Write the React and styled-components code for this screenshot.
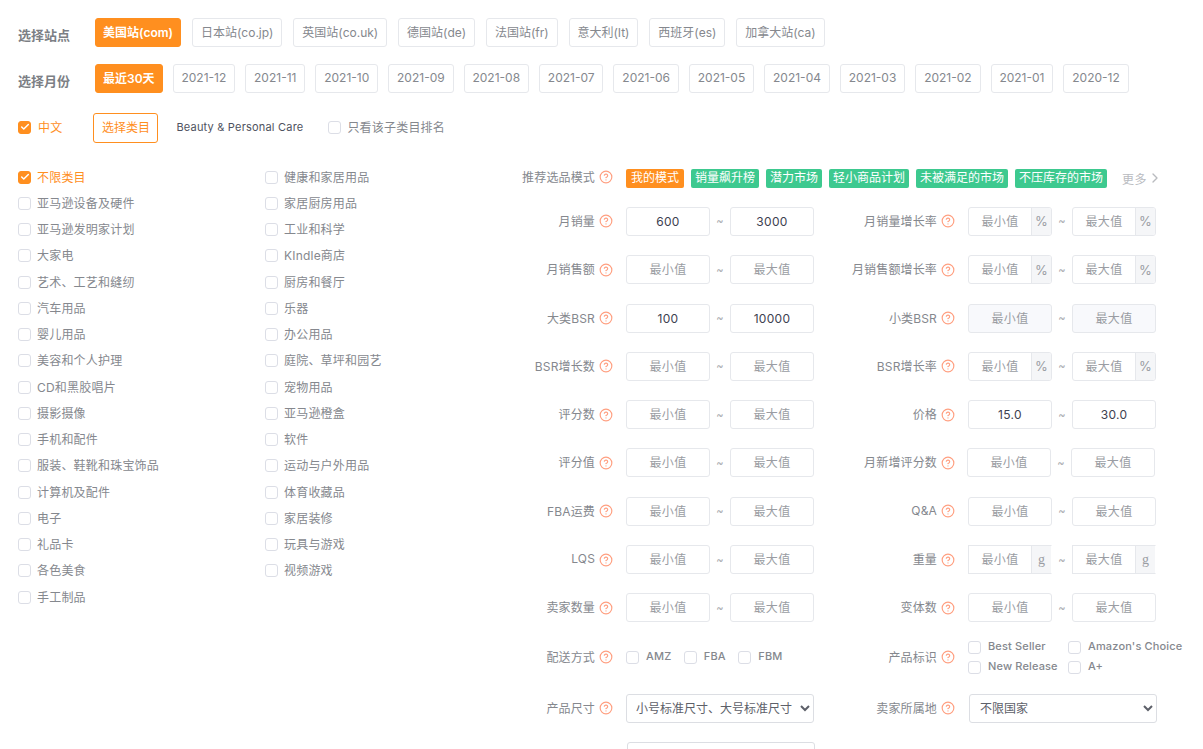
import React from "react";
import styled, { createGlobalStyle } from "styled-components";
import { Check, ChevronRight, CircleHelp } from "lucide-react";

const sites = ["美国站(com)", "日本站(co.jp)", "英国站(co.uk)", "德国站(de)", "法国站(fr)", "意大利(It)", "西班牙(es)", "加拿大站(ca)"];
const months = ["最近30天", "2021-12", "2021-11", "2021-10", "2021-09", "2021-08", "2021-07", "2021-06", "2021-05", "2021-04", "2021-03", "2021-02", "2021-01", "2020-12"];
const categoriesA = ["不限类目", "亚马逊设备及硬件", "亚马逊发明家计划", "大家电", "艺术、工艺和缝纫", "汽车用品", "婴儿用品", "美容和个人护理", "CD和黑胶唱片", "摄影摄像", "手机和配件", "服装、鞋靴和珠宝饰品", "计算机及配件", "电子", "礼品卡", "各色美食", "手工制品"];
const categoriesB = ["健康和家居用品", "家居厨房用品", "工业和科学", "KIndle商店", "厨房和餐厅", "乐器", "办公用品", "庭院、草坪和园艺", "宠物用品", "亚马逊橙盒", "软件", "运动与户外用品", "体育收藏品", "家居装修", "玩具与游戏", "视频游戏"];
const modes = ["销量飙升榜", "潜力市场", "轻小商品计划", "未被满足的市场", "不压库存的市场"];

const rows = [
  [{ label: "月销量", min: "600", max: "3000" }, { label: "月销量增长率", unit: "%" }],
  [{ label: "月销售额" }, { label: "月销售额增长率", unit: "%" }],
  [{ label: "大类BSR", min: "100", max: "10000" }, { label: "小类BSR", disabled: true }],
  [{ label: "BSR增长数" }, { label: "BSR增长率", unit: "%" }],
  [{ label: "评分数" }, { label: "价格", min: "15.0", max: "30.0" }],
  [{ label: "评分值" }, { label: "月新增评分数", shift: true }],
  [{ label: "FBA运费" }, { label: "Q&A" }],
  [{ label: "LQS" }, { label: "重量", unit: "g" }],
  [{ label: "卖家数量" }, { label: "变体数" }],
];

const GlobalStyle = createGlobalStyle`
  html, body {
    margin: 0;
    height: 749px;
    overflow: hidden;
    background: #fff;
    font-family: Inter, "Noto Sans CJK SC", sans-serif;
  }
`;

const Page = styled.div`
  width: 1203px;
  height: 749px;
  overflow: hidden;
  padding: 18px 0 0 18px;
  box-sizing: border-box;
  color: #7c7f85;
  font-size: 12px;
`;

const PickRow = styled.div`
  display: flex;
  align-items: flex-start;
  height: 29px;
  margin-bottom: ${(p) => p.$mb}px;
`;

const PickLabel = styled.div`
  width: 77px;
  flex: none;
  padding-top: 7px;
  font-size: 13px;
  font-weight: 700;
  color: #7c7f85;
`;

const PickList = styled.div`
  display: flex;
  gap: ${(p) => p.$gap}px;
`;

const PickButton = styled.button`
  height: 29px;
  box-sizing: border-box;
  padding: 0 ${(p) => (p.$active ? 7 : 7.9)}px 2px;
  border-radius: 3px;
  border: 1px solid ${(p) => (p.$active ? "#ff8f1f" : "#e6e8ec")};
  background: ${(p) => (p.$active ? "#ff8f1f" : "#fff")};
  color: ${(p) => (p.$active ? "#fff" : "#85888e")};
  font-family: inherit;
  font-size: 12px;
  font-weight: ${(p) => (p.$active ? 600 : 400)};
  white-space: nowrap;
`;

const CategoryBar = styled.div`
  display: flex;
  align-items: center;
  height: 28px;
  margin-top: 20px;
`;

const Box = styled.span`
  width: 13px;
  height: 13px;
  flex: none;
  box-sizing: border-box;
  border-radius: 3px;
  border: 1px solid ${(p) => (p.$on ? "#ff8f1f" : "#dcdee6")};
  background: ${(p) => (p.$on ? "#ff8f1f" : "#fff")};
  display: inline-flex;
  align-items: center;
  justify-content: center;
  color: #fff;
`;

const CheckText = styled.span`
  margin-left: ${(p) => p.$gap || 6}px;
  padding-bottom: 2px;
  font-size: 12px;
  letter-spacing: 0.2px;
  color: ${(p) => (p.$on ? "#ff8f1f" : "#85888e")};
  white-space: nowrap;
`;

const CheckItem = styled.label`
  display: inline-flex;
  align-items: center;
`;

const SelectCategory = styled.button`
  width: 65px;
  height: 30px;
  margin: 2px 0 0 31px;
  padding: 0 0 4px;
  box-sizing: border-box;
  background: #fff;
  border: 1px solid #ff8f1f;
  border-radius: 3px;
  color: #ff8f1f;
  font-family: inherit;
  font-size: 12px;
`;

const CurrentCategory = styled.span`
  margin: 0 25px 0 18px;
  font-size: 11px;
  letter-spacing: 0.2px;
  color: #4e5260;
  white-space: nowrap;
`;

const Body = styled.div`
  display: flex;
  margin-top: 22px;
`;

const Categories = styled.div`
  display: grid;
  grid-template-columns: 247px 234px;
  width: 481px;
  flex: none;
  height: 440px;
  padding-top: 1px;
`;

const CategoryColumn = styled.div`
  display: flex;
  flex-direction: column;
`;

const CategoryRow = styled.div`
  height: 26.25px;
  display: flex;
  align-items: center;
`;

const Form = styled.div`
  width: 703px;
  flex: none;
  margin-top: -6px;
`;

const FormRow = styled.div`
  display: flex;
  align-items: center;
  height: ${(p) => p.$h}px;
`;

const Field = styled.div`
  display: flex;
  align-items: center;
  width: ${(p) => (p.$second ? 342 : 314)}px;
  flex: none;
`;

const FieldLabel = styled.div`
  width: ${(p) => (p.$second ? 124 : 96)}px;
  flex: none;
  padding-bottom: 2px;
  text-align: right;
  white-space: nowrap;
  font-size: 12px;
  letter-spacing: 0.15px;
  color: #85888e;
`;

const Help = styled(CircleHelp)`
  width: 14px;
  height: 14px;
  flex: none;
  margin: 0 ${(p) => (p.$shift ? 12 : 13)}px 0 4px;
  color: #ff9f80;
`;

const HelpSpacer = styled.span`
  width: 31px;
  flex: none;
`;

const Range = styled.div`
  display: flex;
  align-items: center;
`;

const Tilde = styled.span`
  width: 20px;
  text-align: center;
  font-size: 11px;
  color: #a8abb0;
`;

const InputWrap = styled.div`
  width: 84px;
  height: 29px;
  box-sizing: border-box;
  display: flex;
  border: 1px solid #e6e8ec;
  border-right-color: ${(p) => (p.$flat ? "transparent" : "#e6e8ec")};
  border-radius: ${(p) => (p.$flat ? "0" : "3px")};
  background: ${(p) => (p.$disabled ? "#f8f9fc" : "#fff")};
  overflow: hidden;
`;

const Input = styled.input`
  flex: 1;
  min-width: 0;
  width: 100%;
  padding: 0;
  border: 0;
  outline: 0;
  text-align: center;
  background: transparent;
  font-family: inherit;
  font-size: 12px;
  letter-spacing: 0.3px;
  color: #3d4150;
  &::placeholder {
    color: #9a9da3;
    opacity: 1;
  }
`;

const Unit = styled.span`
  width: 19px;
  flex: none;
  display: flex;
  align-items: center;
  justify-content: center;
  background: #f5f6f8;
  border-left: 1px solid #e6e8ec;
  color: #9a9da3;
  font-size: ${(p) => (p.$serif ? 14 : 13)}px;
  font-family: ${(p) => (p.$serif ? '"Liberation Serif", serif' : "inherit")};
`;

const ModeTags = styled.div`
  display: flex;
  align-items: center;
  gap: 7px;
  margin-top: 2px;
`;

const ModeTag = styled.span`
  height: 19px;
  line-height: 18px;
  padding: 0 ${(p) => (p.$mine ? 5 : 4)}px;
  border-radius: 2px;
  background: ${(p) => (p.$mine ? "#ff8f1f" : "#3dc98f")};
  color: #fff;
  font-size: 12px;
  white-space: nowrap;
`;

const More = styled.span`
  display: inline-flex;
  align-items: center;
  margin-left: 8px;
  font-size: 12px;
  letter-spacing: 0.3px;
  color: #b9bbbf;
`;

const Options = styled.div`
  display: flex;
  align-items: center;
  gap: 12.5px;
`;

const BadgeGrid = styled.div`
  display: grid;
  grid-template-columns: 100px 120px;
  row-gap: 4px;
`;

const SmallOption = styled(CheckText)`
  margin-left: 7px;
  font-size: 11px;
  font-weight: 500;
  letter-spacing: 0.15px;
`;

const Select = styled.select`
  width: 188px;
  height: 29px;
  flex: none;
  margin-left: ${(p) => p.$ml || 0}px;
  box-sizing: border-box;
  padding: 0 ${(p) => p.$pad}px;
  background: #fff;
  border: 1px solid #dcdee3;
  border-radius: 3px;
  font-family: inherit;
  font-size: 12px;
  color: #5d6069;
  outline: 0;
`;

const Checkbox = ({ on }) => (
  <Box $on={on}>{on && <Check size={10} strokeWidth={3.5} />}</Box>
);

const RangeInput = ({ min, max, unit, disabled }) => {
  const parts = [
    { placeholder: "最小值", value: min },
    { placeholder: "最大值", value: max },
  ];
  return (
    <Range>
      {parts.map((part, i) => (
        <React.Fragment key={part.placeholder}>
          {i === 1 && <Tilde>~</Tilde>}
          <InputWrap $disabled={disabled} $flat={unit === "g"}>
            <Input placeholder={part.placeholder} defaultValue={part.value} disabled={disabled} />
            {unit && <Unit $serif={unit === "g"}>{unit}</Unit>}
          </InputWrap>
        </React.Fragment>
      ))}
    </Range>
  );
};

export default function App() {
  return (
    <Page>
      <GlobalStyle />

      <PickRow $mb={17}>
        <PickLabel>选择站点</PickLabel>
        <PickList $gap={11}>
          {sites.map((site, i) => (
            <PickButton key={site} $active={i === 0}>{site}</PickButton>
          ))}
        </PickList>
      </PickRow>

      <PickRow $mb={0}>
        <PickLabel>选择月份</PickLabel>
        <PickList $gap={10}>
          {months.map((month, i) => (
            <PickButton key={month} $active={i === 0}>{month}</PickButton>
          ))}
        </PickList>
      </PickRow>

      <CategoryBar>
        <CheckItem>
          <Checkbox on />
          <CheckText $on $gap={7}>中文</CheckText>
        </CheckItem>
        <SelectCategory>选择类目</SelectCategory>
        <CurrentCategory>Beauty &amp; Personal Care</CurrentCategory>
        <CheckItem>
          <Checkbox />
          <CheckText>只看该子类目排名</CheckText>
        </CheckItem>
      </CategoryBar>

      <Body>
        <Categories>
          {[categoriesA, categoriesB].map((column) => (
            <CategoryColumn key={column[0]}>
              {column.map((name) => (
                <CategoryRow key={name}>
                  <Checkbox on={name === "不限类目"} />
                  <CheckText $on={name === "不限类目"}>{name}</CheckText>
                </CategoryRow>
              ))}
            </CategoryColumn>
          ))}
        </Categories>

        <Form>
          <FormRow $h={40.35}>
            <FieldLabel>推荐选品模式</FieldLabel>
            <Help />
            <ModeTags>
              <ModeTag $mine>我的模式</ModeTag>
              {modes.map((mode) => (
                <ModeTag key={mode}>{mode}</ModeTag>
              ))}
              <More>
                更多
                <ChevronRight size={16} />
              </More>
            </ModeTags>
          </FormRow>

          {rows.map((row) => (
            <FormRow key={row[0].label} $h={48.3}>
              {row.map((field, i) => (
                <Field key={field.label} $second={i === 1}>
                  <FieldLabel $second={i === 1}>{field.label}</FieldLabel>
                  <Help $shift={field.shift} />
                  <RangeInput {...field} />
                </Field>
              ))}
            </FormRow>
          ))}

          <FormRow $h={50}>
            <Field>
              <FieldLabel>配送方式</FieldLabel>
              <Help />
              <Options>
                {["AMZ", "FBA", "FBM"].map((name) => (
                  <CheckItem key={name}>
                    <Checkbox />
                    <SmallOption>{name}</SmallOption>
                  </CheckItem>
                ))}
              </Options>
            </Field>
            <Field $second>
              <FieldLabel $second>产品标识</FieldLabel>
              <Help />
              <BadgeGrid>
                {["Best Seller", "Amazon's Choice", "New Release", "A+"].map((name) => (
                  <CheckItem key={name}>
                    <Checkbox />
                    <SmallOption>{name}</SmallOption>
                  </CheckItem>
                ))}
              </BadgeGrid>
            </Field>
          </FormRow>

          <FormRow $h={52.9}>
            <Field>
              <FieldLabel>产品尺寸</FieldLabel>
              <Help />
              <Select $pad={5} defaultValue="a">
                <option value="a">小号标准尺寸、大号标准尺寸</option>
              </Select>
            </Field>
            <Field $second>
              <FieldLabel $second>卖家所属地</FieldLabel>
              <Help />
              <Select $pad={6} $ml={1} defaultValue="a">
                <option value="a">不限国家</option>
              </Select>
            </Field>
          </FormRow>

          <FormRow $h={43}>
            <Field>
              <FieldLabel />
              <HelpSpacer />
              <Select $pad={4} $ml={1} />
            </Field>
          </FormRow>
        </Form>
      </Body>
    </Page>
  );
}
